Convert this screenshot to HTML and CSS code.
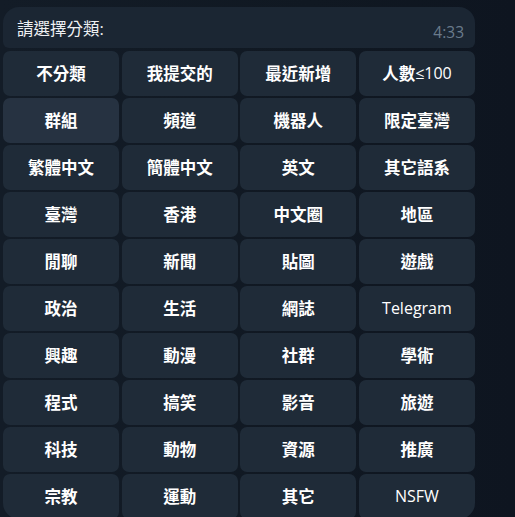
FILE: index.html
```html
<!DOCTYPE html>
<html lang="zh-Hant">
  <head>
    <meta charset="UTF-8" />
    <title>請選擇分類</title>
    <link rel="stylesheet" href="styles.css">
  </head>
  <body>
    <div class="chat">
      <div class="bubble">
        <span class="msg">請選擇分類:</span>
        <span class="time">4:33</span>
      </div>
      <div class="keyboard">
        <div class="btn">不分類</div>
        <div class="btn">我提交的</div>
        <div class="btn">最近新增</div>
        <div class="btn">人數<span class="latin">≤100</span></div>

        <div class="btn hover">群組</div>
        <div class="btn">頻道</div>
        <div class="btn">機器人</div>
        <div class="btn">限定臺灣</div>

        <div class="btn">繁體中文</div>
        <div class="btn">簡體中文</div>
        <div class="btn">英文</div>
        <div class="btn">其它語系</div>

        <div class="btn">臺灣</div>
        <div class="btn">香港</div>
        <div class="btn">中文圈</div>
        <div class="btn">地區</div>

        <div class="btn">閒聊</div>
        <div class="btn">新聞</div>
        <div class="btn">貼圖</div>
        <div class="btn">遊戲</div>

        <div class="btn">政治</div>
        <div class="btn">生活</div>
        <div class="btn">網誌</div>
        <div class="btn"><span class="latin">Telegram</span></div>

        <div class="btn">興趣</div>
        <div class="btn">動漫</div>
        <div class="btn">社群</div>
        <div class="btn">學術</div>

        <div class="btn">程式</div>
        <div class="btn">搞笑</div>
        <div class="btn">影音</div>
        <div class="btn">旅遊</div>

        <div class="btn">科技</div>
        <div class="btn">動物</div>
        <div class="btn">資源</div>
        <div class="btn">推廣</div>

        <div class="btn first-last">宗教</div>
        <div class="btn">運動</div>
        <div class="btn">其它</div>
        <div class="btn last"><span class="latin">NSFW</span></div>
      </div>
    </div>
  </body>
</html>
```

FILE: styles.css
```css
body {
  margin: 0;
  height: 517px;
  overflow: hidden;
  background: linear-gradient(90deg, #131c27 0%, #101822 60%, #0e1520 100%);
  font-family: "Open Sans", "Noto Sans CJK TC", sans-serif;
  color: #f5f5f5;
}

.chat {
  width: 472px;
  padding: 7px 0 0 3px;
}

.bubble {
  position: relative;
  height: 41px;
  background: #1b2633;
  border-radius: 16px 16px 6px 6px;
}

.msg {
  position: absolute;
  left: 14px;
  top: 9px;
  font-size: 16.5px;
  color: #eef0f2;
}

.time {
  position: absolute;
  right: 11px;
  top: 14px;
  font-size: 15.5px;
  color: #6a7b8c;
}

.keyboard {
  display: grid;
  grid-template-columns: repeat(4, 1fr);
  gap: 2px 2.5px;
  margin-top: 3px;
}

.btn {
  height: 45px;
  padding-bottom: 2px;
  box-sizing: border-box;
  display: flex;
  align-items: center;
  justify-content: center;
  background: #1f2b38;
  border-radius: 7px;
  font-size: 16.5px;
  font-weight: 700;
  color: #ffffff;
}

/* latin glyphs in the buttons are lighter than the CJK ones */
.latin {
  font-weight: 400;
  font-size: 16px;
}

.btn.hover {
  background: #263241;
}

.btn.first-last {
  border-bottom-left-radius: 16px;
}

.btn.last {
  border-bottom-right-radius: 16px;
}
```
